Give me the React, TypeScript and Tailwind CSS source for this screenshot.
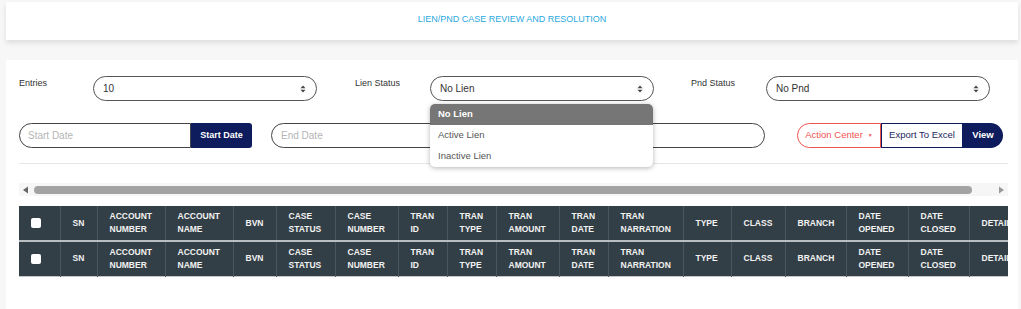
import React from "react";

const columns: { label: string[]; width: number }[] = [
  { label: [], width: 41 },
  { label: ["SN"], width: 37 },
  { label: ["ACCOUNT", "NUMBER"], width: 68 },
  { label: ["ACCOUNT", "NAME"], width: 68 },
  { label: ["BVN"], width: 43 },
  { label: ["CASE", "STATUS"], width: 59 },
  { label: ["CASE", "NUMBER"], width: 63 },
  { label: ["TRAN", "ID"], width: 49 },
  { label: ["TRAN", "TYPE"], width: 49 },
  { label: ["TRAN", "AMOUNT"], width: 63 },
  { label: ["TRAN", "DATE"], width: 49 },
  { label: ["TRAN", "NARRATION"], width: 75 },
  { label: ["TYPE"], width: 48 },
  { label: ["CLASS"], width: 54 },
  { label: ["BRANCH"], width: 61 },
  { label: ["DATE", "OPENED"], width: 62 },
  { label: ["DATE", "CLOSED"], width: 61 },
  { label: ["DETAILS"], width: 80 },
];

function UpDown() {
  return (
    <svg width="6" height="8" viewBox="0 0 6 8" className="shrink-0">
      <path d="M3 0.5 L5.5 3.2 H0.5 Z" fill="#444" />
      <path d="M3 7.5 L5.5 4.8 H0.5 Z" fill="#444" />
    </svg>
  );
}

function Select({ value }: { value: string }) {
  return (
    <div className="flex h-[25px] w-[224px] items-center justify-between rounded-full border border-[#555] bg-white pl-[9px] pr-[10px] text-[10px] text-[#333]">
      <span>{value}</span>
      <UpDown />
    </div>
  );
}

function HeaderRow({ last }: { last?: boolean }) {
  return (
    <tr className={last ? "border-b border-[#c3c7ca]" : "border-b-2 border-[#b9bec1]"}>
      {columns.map((col, i) => (
        <td
          key={i}
          style={{ width: col.width }}
          className="h-[35px] border-r border-[#4b575e] pl-[12px] align-middle text-[8.5px] font-bold leading-[13px] text-[#f2f2f2]"
        >
          {i === 0 ? (
            <div className="h-[10px] w-[10px] rounded-[2px] bg-white" />
          ) : (
            col.label.map((l) => <div key={l} className="whitespace-nowrap">{l}</div>)
          )}
        </td>
      ))}
    </tr>
  );
}

export default function App() {
  return (
    <div className="min-h-screen bg-[#f7f7f7] pl-[6px] pr-[3px] pt-[2px] font-['Liberation_Sans',Arial,sans-serif]">
      {/* Title card */}
      <div className="flex h-[38px] items-center justify-center bg-white pb-[3px] text-[9px] text-[#2aa9e0] shadow-[0_3px_5px_rgba(0,0,0,0.1)]">
        LIEN/PND CASE REVIEW AND RESOLUTION
      </div>

      {/* Filters + table card */}
      <div className="mt-[20px] h-[260px] bg-white px-[13px] pt-[16px]">
        <div className="flex items-start">
          <div className="flex w-[336px] shrink-0 items-start">
            <span className="w-[74px] pt-[1px] text-[9px] text-[#333]">Entries</span>
            <Select value="10" />
          </div>
          <div className="flex w-[336px] shrink-0 items-start">
            <span className="w-[75px] pt-[1px] text-[9px] text-[#333]">Lien Status</span>
            <div className="relative">
              <Select value="No Lien" />
              <div className="absolute left-0 top-[28px] z-10 w-[223px] overflow-hidden rounded-[5px] bg-white text-[9.5px] text-[#555] shadow-[0_1px_5px_rgba(0,0,0,0.3)]">
                <div className="flex h-[21px] items-center bg-[#767676] px-[8px] font-bold text-white">No Lien</div>
                <div className="flex h-[21px] items-center px-[8px]">Active Lien</div>
                <div className="flex h-[21px] items-center px-[8px]">Inactive Lien</div>
              </div>
            </div>
          </div>
          <div className="flex items-start">
            <span className="w-[75px] pt-[1px] text-[9px] text-[#333]">Pnd Status</span>
            <Select value="No Pnd" />
          </div>
        </div>

        <div className="mt-[22px] flex items-center">
          <div className="flex h-[25px] w-[172px] items-center rounded-l-full border border-[#444] pl-[8px] text-[10px] text-[#b5b5b5]">
            Start Date
          </div>
          <button className="h-[25px] w-[61px] rounded-r-[3px] bg-[#0e1b5c] text-[9px] font-bold text-white">
            Start Date
          </button>
          <div className="ml-[19px] flex h-[25px] w-[494px] items-center rounded-full border border-[#444] pl-[9px] text-[10px] text-[#b5b5b5]">
            End Date
          </div>
          <div className="ml-[32px] flex h-[25px] items-center text-[9.5px]">
            <button className="flex h-full w-[84px] items-center justify-center gap-[5px] rounded-l-full border border-[#ef5350] text-[#ef5350]">
              Action Center
              <span className="text-[5px]">▼</span>
            </button>
            <button className="h-full w-[82px] border border-[#0e1b5c] text-[#1b2660]">Export To Excel</button>
            <button className="h-full w-[40px] rounded-r-full bg-[#0e1b5c] font-bold text-white">View</button>
          </div>
        </div>

        <div className="mt-[15px] h-px w-[989px] bg-[#e6e6e6]" />

        {/* Horizontal scrollbar */}
        <div className="mt-[19px] flex h-[13px] w-[989px] items-center bg-[#f6f6f6]">
          <svg width="15" height="8" viewBox="0 0 15 8">
            <path d="M4 4 L9 0.5 V7.5 Z" fill="#666" />
          </svg>
          <div className="h-[8px] w-[938px] rounded-full bg-[#a3a3a3]" />
          <div className="flex-1" />
          <svg width="15" height="8" viewBox="0 0 15 8">
            <path d="M11 4 L6 0.5 V7.5 Z" fill="#999" />
          </svg>
        </div>

        <div className="mt-[10px] w-[989px] overflow-hidden">
          <table className="table-fixed border-collapse bg-[#323f46]" style={{ width: 1030 }}>
            <tbody>
              <HeaderRow />
              <HeaderRow last />
            </tbody>
          </table>
        </div>
      </div>
    </div>
  );
}
